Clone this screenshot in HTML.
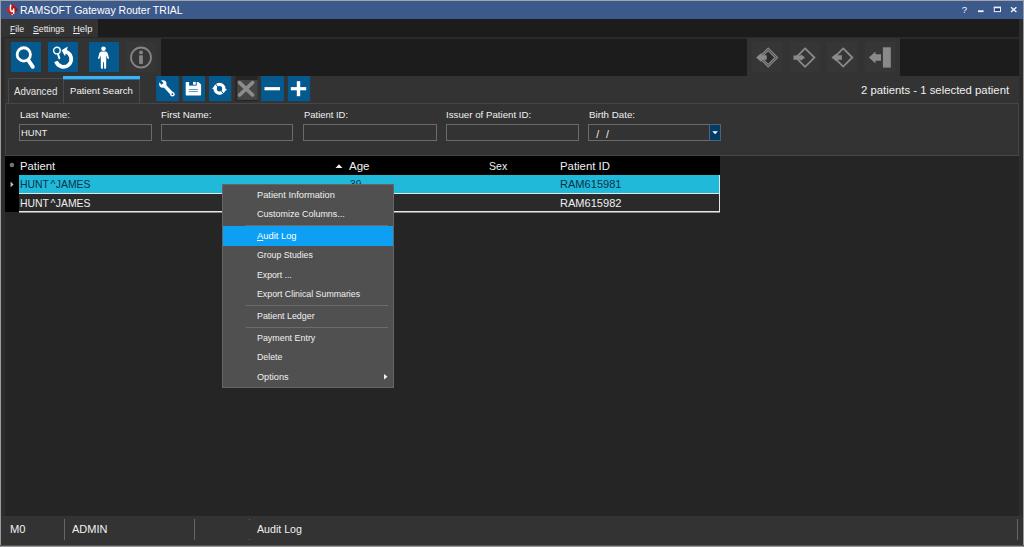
<!DOCTYPE html>
<html>
<head>
<meta charset="utf-8">
<title>RAMSOFT Gateway Router TRIAL</title>
<style>
html,body{margin:0;padding:0;}
body{width:1024px;height:547px;overflow:hidden;background:#2d2d2d;font-family:"Liberation Sans",sans-serif;color:#f0f0f0;position:relative;}
.a{position:absolute;}
.t{position:absolute;white-space:nowrap;transform-origin:0 0;}
.t u{text-decoration:underline;text-underline-offset:1px;}
svg{position:absolute;left:0;top:0;overflow:visible;}
#title{left:1px;top:1px;width:1022px;height:18px;background:#3b598b;}
#menustrip{left:1px;top:19px;width:1018px;height:18px;background:#1c1c1c;}
#menu{left:1px;top:19px;width:97px;height:18px;background:#333;}
#tbline{left:5px;top:37px;width:1014px;height:2px;background:#2a2a2a;}
#tbline2{left:5px;top:37px;width:156px;height:1px;background:#262626;}
#tbstrip{left:5px;top:38px;width:1014px;height:38px;background:#1c1c1c;}
#tbl{left:5px;top:38px;width:156px;height:38px;background:#333;}
#tbr{left:747px;top:38px;width:153px;height:38px;background:#333;}
.bb{position:absolute;background:#045a8f;width:30px;height:30px;top:42px;}
.gb{position:absolute;background:#363636;width:30px;height:30px;top:42px;}
#tabrow{left:5px;top:76px;width:1014px;height:27px;background:#333;}
.tab{position:absolute;box-sizing:border-box;border:1px solid #4a4a4a;border-bottom:none;}
#panel{left:5px;top:103px;width:1014px;height:53px;border:1px solid #464646;box-sizing:border-box;background:#333;}
.inp{position:absolute;box-sizing:border-box;border:1px solid #6b6b6b;background:#333;height:17px;top:124px;}
#gridarea{left:5px;top:156px;width:1014px;height:360px;background:#252525;}
#ghead{left:5px;top:156px;width:715px;height:19px;background:#000;}
#gind{left:5px;top:175px;width:14px;height:37px;background:#000;}
#row1{left:19px;top:175px;width:701px;height:18px;background:#20b9d9;}
#row2{left:19px;top:193px;width:701px;height:19px;background:#2a2a2a;border:1px solid #e6e6e6;border-left:none;box-sizing:border-box;}
#ctx,#ctxhl,.sep{z-index:2}
.ctop{z-index:3}
#ctx{left:222px;top:184px;width:172px;height:204px;background:#505050;border:1px solid #656565;box-sizing:border-box;}
#ctxhl{left:223px;top:226px;width:170px;height:20px;background:#0c9ff4;}
.sep{position:absolute;left:246px;width:142px;height:1px;background:#6c6c6c;}
#status{left:1px;top:516px;width:1022px;height:29px;background:#333;}
.ssep{position:absolute;top:519px;width:1px;height:21px;background:#666;}
#bl{left:0;top:0;width:1px;height:547px;background:#9c9c9c;}
#bt{left:0;top:0;width:1024px;height:1px;background:#a4a4a4;}
#br{left:1023px;top:0;width:1px;height:547px;background:#9c9c9c;}
#bb2{left:0;top:545px;width:1024px;height:2px;background:#969696;border-top:1px solid #555;box-sizing:border-box;}
</style>
</head>
<body>
<div id="title" class="a"></div>
<div id="menustrip" class="a"></div>
<div id="menu" class="a"></div>
<div id="tbstrip" class="a"></div>
<div id="tbline" class="a"></div>
<div id="tbl" class="a"></div>
<div id="tbr" class="a"></div>
<div id="tbline2" class="a"></div>
<div class="bb" style="left:11px"></div>
<div class="bb" style="left:48px"></div>
<div class="bb" style="left:89px"></div>
<div class="gb" style="left:126px"></div>
<div class="gb" style="left:752px"></div>
<div class="gb" style="left:790px"></div>
<div class="gb" style="left:827px"></div>
<div class="gb" style="left:865px"></div>

<div id="tabrow" class="a"></div>
<div class="tab" style="left:8px;top:78px;width:56px;height:25px;border-radius:2px 0 0 0"></div>
<div class="tab" style="left:63px;top:78px;width:77px;height:25px;"></div>
<div class="a" style="left:63px;top:76px;width:77px;height:3px;background:#38b3f6"></div>
<div class="a" style="left:63px;top:79px;width:77px;height:1px;background:#35637d"></div>

<div id="panel" class="a"></div>
<div class="inp" style="left:19px;width:133px"></div>
<div class="inp" style="left:161px;width:132px"></div>
<div class="inp" style="left:303px;width:134px"></div>
<div class="inp" style="left:446px;width:133px"></div>
<div class="inp" style="left:588px;width:133px"></div>
<div class="a" style="left:709px;top:124px;width:12px;height:17px;background:#063c64;box-sizing:border-box;border:1px solid #46657f"></div>

<div id="gridarea" class="a"></div>
<div id="ghead" class="a"></div>
<div id="gind" class="a"></div>
<div id="row1" class="a"></div>
<div id="row2" class="a"></div>
<div class="a" style="left:719px;top:175px;width:1px;height:38px;background:#e6e6e6"></div>
<div class="a" style="left:19px;top:212px;width:701px;height:1px;background:#8a8a8a"></div>

<!-- icons -->
<svg width="1024" height="547" viewBox="0 0 1024 547">
 <!-- app logo -->
 <defs><linearGradient id="lg" x1="0" y1="0" x2="1" y2="0"><stop offset="0" stop-color="#e02424"/><stop offset="1" stop-color="#9c0a0c"/></linearGradient></defs>
 <polygon points="6,9.8 12,3.8 18,9.8 12,15.9" fill="url(#lg)"/>
 <path d="M10.7,5.2 C10.2,8 10.4,10.6 11.5,11.4 C12.6,12 13.5,10.8 13.7,9 M13.7,9 V13.3" stroke="#fff" stroke-width="1.5" fill="none" stroke-linecap="round"/>
 <circle cx="12.1" cy="14.6" r="0.8" fill="#f6d0d0"/>
 <!-- window buttons -->
 <rect x="978" y="10.3" width="5.6" height="1.8" fill="#f4f4f4"/>
 <rect x="994.3" y="7.6" width="6.2" height="4" fill="#1d3f80" stroke="#f0f0f0" stroke-width="1"/>
 <rect x="993.8" y="6.6" width="7.2" height="1.6" fill="#f0f0f0"/>
 <path d="M1011,7.2 L1016.4,12 M1016.4,7.2 L1011,12" stroke="#f4f4f4" stroke-width="1.4" fill="none"/>
 <!-- search -->
 <g transform="translate(11,42)" stroke="#fff" fill="none">
  <circle cx="12.8" cy="12.4" r="6.65" stroke-width="2.8"/>
  <path d="M17.6,18.6 L21.8,24.8" stroke-width="3.9" stroke-linecap="round"/>
 </g>
 <!-- undo search -->
 <g transform="translate(48,42)" stroke="#fff" fill="none">
  <circle cx="8.9" cy="8.6" r="3.3" stroke-width="1.4"/>
  <path d="M10.1,12.4 L11.4,16.4" stroke-width="1.9" stroke-linecap="round"/>
  <path d="M17.5,9.5 A7.8,7.8 0 1 1 8,19.4" stroke-width="3.7"/>
  <polygon points="13.6,8.3 19.8,4.4 17,14.2" fill="#fff" stroke="none"/>
 </g>
 <!-- person -->
 <g transform="translate(89,42)" fill="#fff">
  <circle cx="14.5" cy="6.7" r="2.3"/>
  <path d="M12.2,9.6 L16.9,9.6 Q18.4,9.9 18.8,11.6 L20,16.2 Q19.8,17.3 18.8,16.9 L17.3,13.4 L17.1,26 Q17,26.8 16.2,26.8 L15.2,26.8 L14.9,20 L14.2,20 L13.8,26.8 L12.8,26.8 Q12,26.8 11.9,26 L11.7,13.4 L10.2,16.9 Q9.2,17.3 9,16.2 L10.2,11.6 Q10.7,9.9 12.2,9.6 Z"/>
 </g>
 <!-- info -->
 <g transform="translate(126,42)">
  <circle cx="15" cy="15.5" r="10" stroke="#858585" stroke-width="1.8" fill="none"/>
  <circle cx="15" cy="10.4" r="1.9" fill="#858585"/>
  <rect x="13.1" y="13.3" width="3.8" height="8.6" fill="#858585"/>
 </g>
 <!-- right nav icons -->
 <g fill="#8a8a8a" stroke="none">
  <!-- 1 -->
  <polygon points="768.2,48.1 777.6,57.5 768.2,66.9 758.8,57.5" fill="none" stroke="#8a8a8a" stroke-width="1.2"/>
  <polygon points="768.2,50.6 775.1,57.5 768.2,64.4 761.3,57.5" fill="#2b2b2b" stroke="#8a8a8a" stroke-width="1.2"/>
  <polygon points="756.2,57.5 761.2,53 761.2,55.3 766.7,55.3 766.7,59.7 761.2,59.7 761.2,62"/>
  <!-- 2 -->
  <polygon points="805.1,48.4 814.4,57.6 805.1,66.8 795.8,57.6" fill="none" stroke="#8a8a8a" stroke-width="1.8"/>
  <polygon points="793.5,55.4 800.7,55.4 800.7,54.2 805,57.6 800.7,61 800.7,59.8 793.5,59.8"/>
  <!-- 3 -->
  <polygon points="843.2,48.4 852.3,57.5 843.2,66.6 834.1,57.5" fill="none" stroke="#8a8a8a" stroke-width="1.8"/>
  <polygon points="831.4,57.5 836.5,53.4 836.5,55.3 841.9,55.3 841.9,59.7 836.5,59.7 836.5,61.6"/>
  <!-- 4 -->
  <rect x="882.9" y="47.3" width="7.9" height="20.3"/>
  <polygon points="868.9,57.5 875.5,51.6 875.5,54.3 881,54.3 881,60.7 875.5,60.7 875.5,63.4"/>
 </g>
 <!-- small buttons -->
 <g>
  <rect x="156.2" y="76" width="22.6" height="25.2" fill="#045a8f"/>
  <rect x="182.5" y="76" width="22.5" height="25.2" fill="#045a8f"/>
  <rect x="208.9" y="76" width="22.4" height="25.2" fill="#045a8f"/>
  <rect x="235.2" y="76" width="22.4" height="25.2" fill="#262626"/>
  <rect x="237.1" y="80" width="20.5" height="19.9" fill="#454545"/>
  <rect x="261.1" y="76" width="22.8" height="25.2" fill="#045a8f"/>
  <rect x="287.8" y="76" width="22.3" height="25.2" fill="#045a8f"/>
  <!-- wrench -->
  <g transform="translate(156,76)">
   <path d="M7.2,8.4 L16.3,18" stroke="#fff" stroke-width="3.4" stroke-linecap="round" fill="none"/>
   <circle cx="6.8" cy="8" r="3.7" fill="#fff"/>
   <path d="M7.5,6.9 L4.0,3.4 L2.2,5.2 L5.7,8.7 Z" fill="#045a8f"/>
   <circle cx="16.4" cy="18.2" r="2.3" fill="#fff"/>
   <circle cx="16.4" cy="18.2" r="0.9" fill="#045a8f"/>
  </g>
  <!-- floppy -->
  <g transform="translate(182.5,76)">
   <path d="M4,5.9 H15.9 L18.6,8.6 V18.8 Q18.6,19.6 17.8,19.6 H4 Q3.2,19.6 3.2,18.8 V6.7 Q3.2,5.9 4,5.9 Z" fill="#fff"/>
   <rect x="6.6" y="5.5" width="7.6" height="4.1" fill="#045a8f"/>
   <rect x="10.5" y="5.9" width="2.8" height="2.8" fill="#fff"/>
   <rect x="6.3" y="13.1" width="9.1" height="0.9" fill="#4d8fbb"/>
   <rect x="6.3" y="15" width="9.1" height="0.9" fill="#4d8fbb"/>
  </g>
  <!-- refresh -->
  <g transform="translate(209,76)">
   <circle cx="10.5" cy="12.8" r="4.4" stroke="#fff" stroke-width="3.4" fill="none"/>
   <path d="M6.2,7.6 L14.8,18" stroke="#045a8f" stroke-width="1" fill="none"/>
   <polygon points="3,12.6 6.6,9.6 7.6,13.8" fill="#fff"/>
   <polygon points="18.1,13.4 14.4,16.2 13.6,12" fill="#fff"/>
  </g>
  <!-- X -->
  <path d="M239.6,82.6 L252.6,95 M252.6,82.6 L239.6,95" stroke="#8c8c8c" stroke-width="3.7" stroke-linecap="round" fill="none"/>
  <!-- minus / plus -->
  <rect x="264.5" y="87.1" width="15.5" height="3.2" fill="#fff"/>
  <rect x="290.8" y="87.1" width="15.4" height="3.2" fill="#fff"/>
  <rect x="296.8" y="81.2" width="3.4" height="15" fill="#fff"/>
 </g>
 <!-- date dropdown arrow -->
 <polygon points="712.3,131.2 717.9,131.2 715.1,134.3" fill="#fff"/>
 <!-- grid header glyphs -->
 <circle cx="11.9" cy="165" r="2.3" fill="#747474"/>
 <polygon points="10.6,181.6 13.5,184.4 10.6,187.2" fill="#c8c8c8"/>
 <polygon points="335.5,168 342.5,168 339,164.2" fill="#f0f0f0"/>
</svg>

<div id="ctx" class="a"></div>
<div id="ctxhl" class="a"></div>
<div class="sep" style="top:225px"></div>
<div class="sep" style="top:305px"></div>
<div class="sep" style="top:327px"></div>
<svg class="ctop" width="1024" height="547" viewBox="0 0 1024 547"><polygon points="384,374 387.6,376.8 384,379.6" fill="#f0f0f0"/></svg>

<div id="status" class="a"></div>
<div class="ssep" style="left:64px"></div>
<div class="ssep" style="left:194px"></div>
<div class="ssep" style="left:1017px"></div>
<div class="a" style="left:249px;top:519px;width:1px;height:1px;background:#5c5c5c"></div>
<div class="a" style="left:249px;top:539px;width:1px;height:1px;background:#5c5c5c"></div>

<div class="t" id="ttl" style="left:19.56px;top:3.70px;font-size:11.7px;line-height:11.7px;color:#ffffff;transform:scaleX(0.8998)">RAMSOFT Gateway Router TRIAL</div>
<div class="t" id="m1" style="left:10.14px;top:24.30px;font-size:9.8px;line-height:9.8px;color:#f0f0f0;transform:scaleX(0.8976)"><u>F</u>ile</div>
<div class="t" id="m2" style="left:32.79px;top:24.30px;font-size:9.8px;line-height:9.8px;color:#f0f0f0;transform:scaleX(0.8866)"><u>S</u>ettings</div>
<div class="t" id="m3" style="left:72.82px;top:24.30px;font-size:9.8px;line-height:9.8px;color:#f0f0f0;transform:scaleX(0.9624)"><u>H</u>elp</div>
<div class="t" id="tab1" style="left:14.00px;top:87.33px;font-size:10px;line-height:10px;color:#e4e4e4;transform:scaleX(0.9734)">Advanced</div>
<div class="t" id="tab2" style="left:69.89px;top:85.60px;font-size:9.8px;line-height:9.8px;color:#f4f4f4;transform:scaleX(0.9771)">Patient Search</div>
<div class="t" id="count" style="left:861.08px;top:85.49px;font-size:11px;line-height:11px;color:#f0f0f0;transform:scaleX(1.0306)">2 patients - 1 selected patient</div>
<div class="t" id="l1" style="left:19.82px;top:109.70px;font-size:9.8px;line-height:9.8px;color:#f0f0f0;transform:scaleX(0.9974)">Last Name:</div>
<div class="t" id="l2" style="left:160.78px;top:109.70px;font-size:9.8px;line-height:9.8px;color:#f0f0f0;transform:scaleX(0.9978)">First Name:</div>
<div class="t" id="l3" style="left:304.24px;top:109.70px;font-size:9.8px;line-height:9.8px;color:#f0f0f0;transform:scaleX(0.9619)">Patient ID:</div>
<div class="t" id="l4" style="left:445.59px;top:109.70px;font-size:9.8px;line-height:9.8px;color:#f0f0f0;transform:scaleX(0.9912)">Issuer of Patient ID:</div>
<div class="t" id="l5" style="left:588.67px;top:109.70px;font-size:9.8px;line-height:9.8px;color:#f0f0f0;transform:scaleX(0.9946)">Birth Date:</div>
<div class="t" id="v1" style="left:21.08px;top:128.47px;font-size:9.6px;line-height:9.6px;color:#f0f0f0;transform:scaleX(0.9853)">HUNT</div>
<div class="t" id="h1" style="left:19.76px;top:161.27px;font-size:11.2px;line-height:11.2px;color:#f0f0f0;transform:scaleX(1.0069)">Patient</div>
<div class="t" id="h2" style="left:348.54px;top:161.27px;font-size:11.2px;line-height:11.2px;color:#f0f0f0;transform:scaleX(1.0307)">Age</div>
<div class="t" id="h3" style="left:488.81px;top:161.27px;font-size:11.2px;line-height:11.2px;color:#f0f0f0;transform:scaleX(0.9448)">Sex</div>
<div class="t" id="h4" style="left:559.76px;top:161.27px;font-size:11.2px;line-height:11.2px;color:#f0f0f0;transform:scaleX(1.0161)">Patient ID</div>
<div class="t" id="r1a" style="left:19.81px;top:179.13px;font-size:10.6px;line-height:10.6px;color:#0a3149;transform:scaleX(0.9838)">HUNT<span style="margin:0 0.3px 0 1.6px">^</span>JAMES</div>
<div class="t" id="r1b" style="left:349.70px;top:179.13px;font-size:10.6px;line-height:10.6px;color:#0a3149;transform:scaleX(0.9612)">39</div>
<div class="t" id="r1c" style="left:559.66px;top:179.13px;font-size:10.6px;line-height:10.6px;color:#0a3149;transform:scaleX(1.0445)">RAM615981</div>
<div class="t" id="r2a" style="left:19.81px;top:198.13px;font-size:10.6px;line-height:10.6px;color:#f0f0f0;transform:scaleX(0.9838)">HUNT<span style="margin:0 0.3px 0 1.6px">^</span>JAMES</div>
<div class="t" id="r2c" style="left:559.66px;top:198.13px;font-size:10.6px;line-height:10.6px;color:#f0f0f0;transform:scaleX(1.0432)">RAM615982</div>
<div class="t" id="c1" style="left:257.49px;top:190.81px;font-size:9.2px;line-height:9.2px;color:#f0f0f0;transform:scaleX(1.0087);z-index:3">Patient Information</div>
<div class="t" id="c2" style="left:257.13px;top:210.21px;font-size:9.2px;line-height:9.2px;color:#f0f0f0;transform:scaleX(0.9775);z-index:3">Customize Columns...</div>
<div class="t" id="c3" style="left:257.46px;top:232.11px;font-size:9.2px;line-height:9.2px;color:#ffffff;transform:scaleX(1.0184);z-index:3"><u>A</u>udit Log</div>
<div class="t" id="c4" style="left:257.28px;top:250.71px;font-size:9.2px;line-height:9.2px;color:#f0f0f0;transform:scaleX(0.9498);z-index:3">Group Studies</div>
<div class="t" id="c5" style="left:257.39px;top:270.71px;font-size:9.2px;line-height:9.2px;color:#f0f0f0;transform:scaleX(0.9454);z-index:3">Export ...</div>
<div class="t" id="c6" style="left:257.35px;top:290.46px;font-size:9.2px;line-height:9.2px;color:#f0f0f0;transform:scaleX(0.9568);z-index:3">Export Clinical Summaries</div>
<div class="t" id="c7" style="left:257.48px;top:311.61px;font-size:9.2px;line-height:9.2px;color:#f0f0f0;transform:scaleX(0.9635);z-index:3">Patient Ledger</div>
<div class="t" id="c8" style="left:257.42px;top:333.96px;font-size:9.2px;line-height:9.2px;color:#f0f0f0;transform:scaleX(0.9675);z-index:3">Payment Entry</div>
<div class="t" id="c9" style="left:257.01px;top:352.61px;font-size:9.2px;line-height:9.2px;color:#f0f0f0;transform:scaleX(0.9525);z-index:3">Delete</div>
<div class="t" id="c10" style="left:257.11px;top:373.21px;font-size:9.2px;line-height:9.2px;color:#f0f0f0;transform:scaleX(0.9963);z-index:3">Options</div>
<div class="t" id="s1" style="left:9.86px;top:524.77px;font-size:10.2px;line-height:10.2px;color:#f0f0f0;transform:scaleX(1.0959)">M0</div>
<div class="t" id="s2" style="left:72.06px;top:524.77px;font-size:10.2px;line-height:10.2px;color:#f0f0f0;transform:scaleX(1.0781)">ADMIN</div>
<div class="t" id="s3" style="left:256.67px;top:524.77px;font-size:10.2px;line-height:10.2px;color:#f0f0f0;transform:scaleX(1.0433)">Audit Log</div>
<div class="t" style="left:961.8px;top:4.6px;font-size:9.6px;line-height:9.6px;color:#ffffff">?</div>
<div class="t" id="d1" style="left:596.2px;top:128.6px;font-size:10.5px;line-height:10.5px;color:#f0f0f0">/</div>
<div class="t" id="d2" style="left:605.9px;top:128.6px;font-size:10.5px;line-height:10.5px;color:#f0f0f0">/</div>

<div id="bl" class="a"></div><div id="bt" class="a"></div><div id="br" class="a"></div><div id="bb2" class="a"></div>
</body>
</html>
